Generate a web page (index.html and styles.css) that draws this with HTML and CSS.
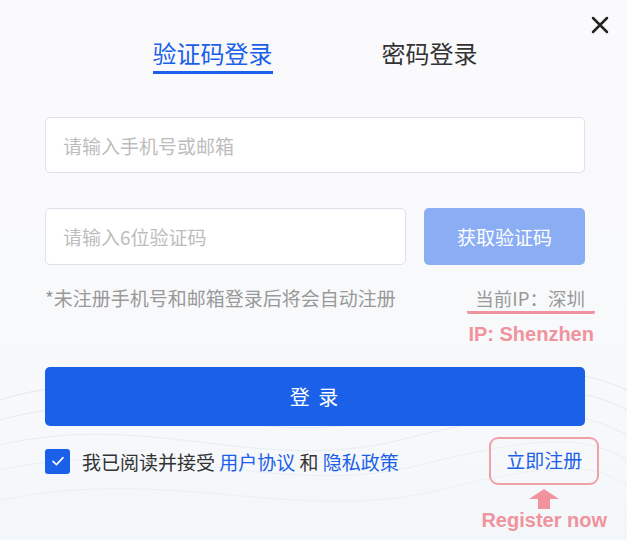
FILE: index.html
```html
<!DOCTYPE html>
<html lang="zh-CN">
<head>
    <meta charset="UTF-8">
    <meta name="viewport" content="width=device-width, initial-scale=1.0">
    <title>登录</title>
    <link rel="stylesheet" href="styles.css">
</head>
<body>
    <div class="dialog">
        <svg class="waves" width="627" height="200" viewBox="0 0 627 200">
            <path d="M0 60 C120 20 220 90 360 60 S560 20 627 50" fill="none" stroke="#e3e9f0" stroke-width="1"/>
            <path d="M0 80 C140 40 240 110 380 80 S570 40 627 70" fill="none" stroke="#e6ebf1" stroke-width="1"/>
            <path d="M0 105 C150 70 260 135 400 100 S580 70 627 95" fill="none" stroke="#e8edf2" stroke-width="1"/>
            <path d="M0 130 C160 95 280 160 420 125 S590 100 627 120" fill="none" stroke="#eaeef3" stroke-width="1"/>
            <path d="M0 160 C170 125 300 185 440 150 S600 130 627 145" fill="none" stroke="#ecf0f4" stroke-width="1"/>
        </svg>
        <button class="close" aria-label="关闭">
            <svg width="18" height="18" viewBox="0 0 18 18"><path d="M2 2L16 16M16 2L2 16" stroke="#222" stroke-width="2.5" stroke-linecap="round"/></svg>
        </button>
        <div class="tabs">
            <span class="tab active">验证码登录</span>
            <span class="tab">密码登录</span>
        </div>
        <div class="form">
            <div class="field">请输入手机号或邮箱</div>
            <div class="code-row">
                <div class="field">请输入6位验证码</div>
                <button class="get-code">获取验证码</button>
            </div>
            <div class="tip-row">
                <span class="tip">*未注册手机号和邮箱登录后将会自动注册</span>
                <div class="ip">
                    <span class="ip-text">当前IP：深圳</span>
                    <span class="note">IP: Shenzhen</span>
                </div>
            </div>
            <button class="login">登 录</button>
            <div class="agree-row">
                <label class="agree">
                    <span class="check">
                        <svg width="16" height="16" viewBox="0 0 16 16"><path d="M3 8.3L6.5 11.6L13 4.6" fill="none" stroke="#fff" stroke-width="1.6" stroke-linecap="round" stroke-linejoin="round"/></svg>
                    </span>
                    <span>我已阅读并接受 <a>用户协议</a> 和 <a>隐私政策</a></span>
                </label>
                <div class="register">
                    <a class="register-link">立即注册</a>
                    <svg class="arrow" width="32" height="20" viewBox="0 0 32 20"><path d="M16 0L31 10H22V20H10V10H1Z" fill="#f0939d"/></svg>
                    <span class="note">Register now</span>
                </div>
            </div>
        </div>
    </div>
</body>
</html>
```

FILE: styles.css
```css
body {
    margin: 0;
    padding: 0;
    background: #f9fafc;
    font-family: "Noto Sans CJK SC", "Noto Sans", sans-serif;
    color: #333;
}
.dialog {
    position: relative;
    width: 627px;
    height: 540px;
    box-sizing: border-box;
    padding: 38px 42px 0 45px;
    background: linear-gradient(180deg, #fafafc 0%, #f8f9fb 60%, #f4f7fa 100%);
    overflow: hidden;
}
/* decorative lines behind the form */
.waves {
    position: absolute;
    left: 0;
    bottom: 0;
}
.tabs,
.form {
    position: relative;
}
.close {
    position: absolute;
    top: 16px;
    right: 18px;
    padding: 0;
    border: none;
    background: none;
    line-height: 0;
}
/* Tabs */
.tabs {
    display: flex;
    justify-content: center;
    gap: 109px;
    height: 79px;
}
.tab {
    font-size: 24px;
    line-height: 30px;
    height: 33px;
    color: #333;
}
.tab.active {
    color: #1b60e8;
    border-bottom: 3px solid #1b60e8;
}
/* Form */
.field {
    height: 56px;
    box-sizing: border-box;
    border: 1px solid #dfe1ea;
    border-radius: 5px;
    background: #fff;
    padding-left: 17px;
    display: flex;
    align-items: center;
    font-size: 19px;
    color: #bdbdbd;
}
.code-row {
    display: flex;
    gap: 18px;
    margin-top: 35px;
}
.code-row .field {
    flex: 1;
    height: 57px;
}
.get-code {
    width: 161px;
    border: none;
    border-radius: 5px;
    background: #8badf3;
    color: #fff;
    font-family: inherit;
    font-size: 19px;
}
.tip-row {
    display: flex;
    justify-content: space-between;
    margin-top: 20px;
    height: 82px;
}
.tip {
    font-size: 19px;
    line-height: 26px;
    color: #999;
}
.ip {
    display: flex;
    flex-direction: column;
    align-items: center;
    margin-right: -10px;
}
.ip-text {
    font-size: 18.5px;
    line-height: 26px;
    color: #999;
    padding: 0 10px 0 8px;
    border-bottom: 3px solid #f0939d;
    border-radius: 2px;
}
.note {
    font-family: "Liberation Sans", Arial, sans-serif;
    font-weight: bold;
    font-size: 20px;
    color: #f0939d;
    margin-top: 9px;
}
.login {
    display: block;
    width: 100%;
    height: 59px;
    border: none;
    border-radius: 5px;
    background: #1b60e8;
    color: #fff;
    font-family: inherit;
    font-size: 20px;
    letter-spacing: 2px;
}
.agree-row {
    display: flex;
    justify-content: space-between;
    margin-top: 11px;
}
.agree {
    display: flex;
    align-items: center;
    gap: 12px;
    font-size: 19px;
    color: #333;
    height: 48px;
}
.agree a {
    color: #1b60e8;
}
.check {
    width: 25px;
    height: 25px;
    border-radius: 3px;
    background: #1b60e8;
    display: flex;
    align-items: center;
    justify-content: center;
}
.register {
    display: flex;
    flex-direction: column;
    align-items: center;
    margin-right: -22px;
}
.register-link {
    display: block;
    box-sizing: border-box;
    width: 110px;
    height: 48px;
    border: 2px solid #f0a0a8;
    border-radius: 9px;
    text-align: center;
    line-height: 42px;
    font-size: 19px;
    color: #1b60e8;
}
.arrow {
    margin-top: 4px;
}
.register .note {
    margin-top: 0;
}
```
